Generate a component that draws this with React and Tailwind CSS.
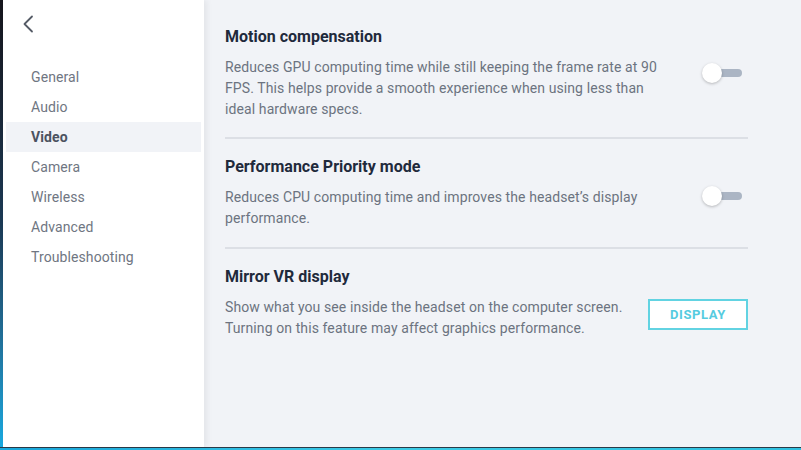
import React from 'react';

const navItems = ['General', 'Audio', 'Video', 'Camera', 'Wireless', 'Advanced', 'Troubleshooting'];

const Toggle = () => (
  <div className="relative w-[40px] h-[22px] shrink-0">
    <div className="absolute left-[6px] right-0 top-[7px] h-[8px] rounded-full bg-[#abb5c4]" />
    <div className="absolute left-0 top-[1px] w-[20px] h-[20px] rounded-full bg-white shadow-[0_1px_3px_rgba(0,0,0,0.25)]" />
  </div>
);

const Section = ({ title, children, control, divider = true, pb = 'pb-[17px]' }) => (
  <div className={`pt-4 ${pb} ${divider ? 'border-b-2 border-[#dcdfe5]' : ''}`}>
    <div className="flex items-center justify-between">
      <div>
        <h2 className="text-[16px] leading-6 font-bold text-[#1f2a3c]">{title}</h2>
        {children}
      </div>
      {control}
    </div>
  </div>
);

export default function App() {
  return (
    <div className="w-[801px] h-[450px] flex flex-col overflow-hidden" style={{ fontFamily: 'Roboto, "Liberation Sans", sans-serif' }}>
      <div className="flex flex-1 min-h-0">
        <div className="w-[3px] bg-gradient-to-b from-[#15151c] via-[#1b3a55] to-[#17a9e0]" />
        {/* Sidebar */}
        <aside className="relative z-10 w-[201px] bg-white shadow-[3px_0_6px_rgba(0,0,0,0.06)]">
          <button className="ml-[16px] mt-[14px] w-[18px] h-[20px] flex items-center justify-center text-[#555b66]">
            <svg width="12" height="18" viewBox="0 0 12 18" fill="none">
              <polyline points="10,1.5 2.5,9 10,16.5" stroke="currentColor" strokeWidth="1.8" strokeLinecap="round" strokeLinejoin="round" />
            </svg>
          </button>
          <nav className="mt-[28px] px-[3px]">
            {navItems.map((item) => (
              <div
                key={item}
                className={`h-[30px] flex items-center pl-[25px] text-[14px] tracking-[0.1px] ${
                  item === 'Video' ? 'bg-[#f1f3f7] font-bold text-[#4b5260]' : 'text-[#6f7682]'
                }`}
              >
                {item}
              </div>
            ))}
          </nav>
        </aside>
        {/* Content */}
        <main className="flex-1 bg-[#f1f3f7] pl-[21px] pt-[9px]">
          <div className="w-[523px]">
            <Section
              title="Motion compensation"
              control={<div className="mr-[6px]"><Toggle /></div>}
            >
              <p className="mt-2 w-[448px] text-[14px] leading-[21px] tracking-[0.1px] text-[#6c7380]">
                Reduces GPU computing time while still keeping the frame rate at 90 FPS. This helps provide a smooth experience when using less than ideal hardware specs.
              </p>
            </Section>
            <Section
              title="Performance Priority mode"
              pb="pb-[18px]"
              control={<div className="mr-[6px] mt-[8px]"><Toggle /></div>}
            >
              <p className="mt-2 w-[448px] text-[14px] leading-[21px] tracking-[0.1px] text-[#6c7380]">
                Reduces CPU computing time and improves the headset’s display performance.
              </p>
            </Section>
            <div className="pt-4">
              <h2 className="text-[16px] leading-6 font-bold text-[#1f2a3c]">Mirror VR display</h2>
              <div className="mt-2 flex items-center justify-between">
                <p className="w-[410px] text-[14px] leading-[21px] tracking-[0.1px] text-[#6c7380]">
                  Show what you see inside the headset on the computer screen. Turning on this feature may affect graphics performance.
                </p>
                <button className="w-[100px] h-[31px] -mt-[7px] border-2 border-[#62d3e2] bg-white text-[#55cbe0] text-[13px] font-bold tracking-[0.6px] flex items-center justify-center">
                  DISPLAY
                </button>
              </div>
            </div>
          </div>
        </main>
      </div>
      <div className="h-[1px] bg-[#2a3a48]" />
      <div className="h-[2px] bg-gradient-to-r from-[#19a9de] via-[#3ccbe6] to-[#2fc0e0]" />
    </div>
  );
}
